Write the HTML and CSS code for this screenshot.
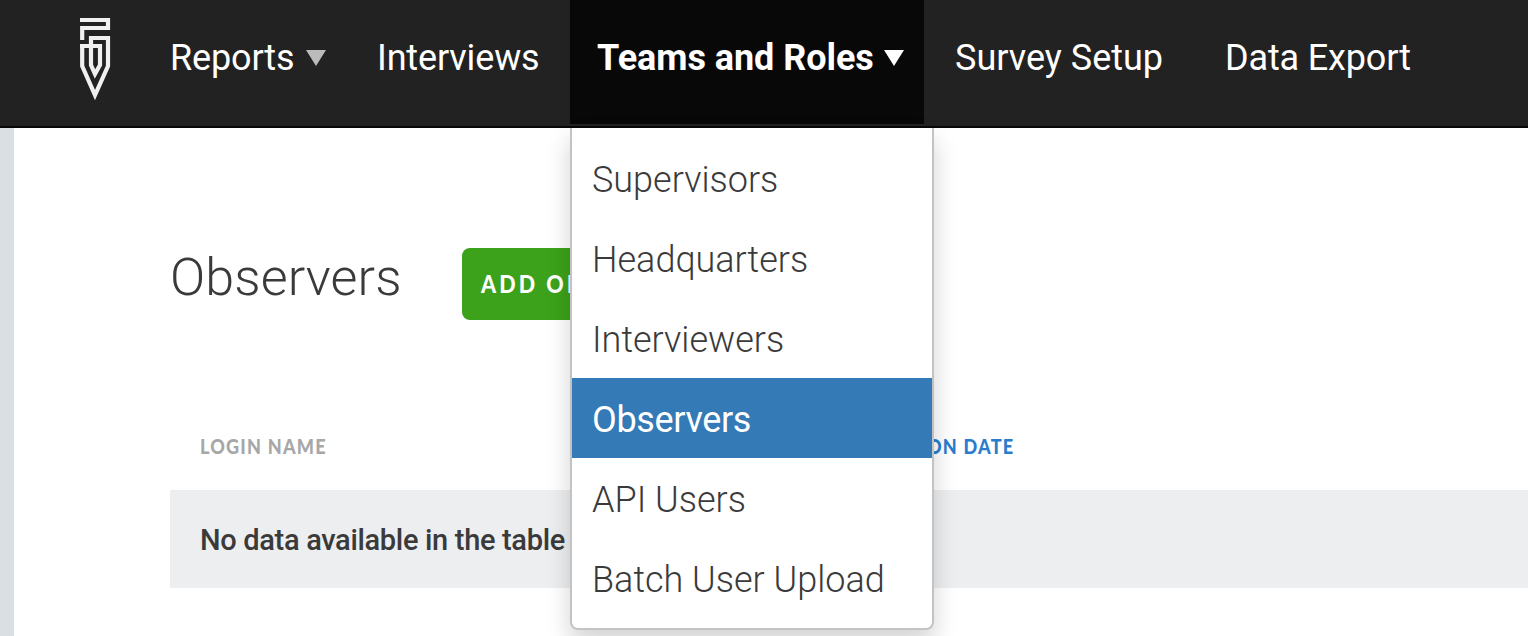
FILE: index.html
```
<!DOCTYPE html>
<html lang="en">
<head>
<meta charset="utf-8">
<title>Observers</title>
<link rel="stylesheet" href="styles.css">
</head>
<body>
<header class="navbar">
  <a class="logo" aria-label="Home">
    <svg width="32" height="84" viewBox="0 0 32 84" fill="none" stroke="#f0f0f1" stroke-width="4.2">
      <path d="M1 3H29V11H3.2V23"/>
      <path d="M1 29H21V48L16 57L12 48V21H29V49L16 78L3.2 49V29"/>
    </svg>
  </a>
  <nav class="menu">
    <a class="item reports"><span class="label">Reports</span><i class="caret"></i></a>
    <a class="item interviews"><span class="label">Interviews</span></a>
    <div class="item teams active"><span class="label">Teams and Roles</span><i class="caret"></i>
      <ul class="dropdown">
        <li><span>Supervisors</span></li>
        <li><span>Headquarters</span></li>
        <li><span>Interviewers</span></li>
        <li class="selected"><span>Observers</span></li>
        <li><span>API Users</span></li>
        <li><span>Batch User Upload</span></li>
      </ul>
    </div>
    <a class="item survey"><span class="label">Survey Setup</span></a>
    <a class="item export"><span class="label">Data Export</span></a>
  </nav>
</header>
<main class="page">
  <div class="heading">
    <h1>Observers</h1>
    <button class="add"><span class="narrow">ADD OBSERVER</span></button>
  </div>
  <div class="table">
    <div class="thead"><span class="login"><span class="narrow">LOGIN NAME</span></span><span class="narrow created">CREATION DATE</span></div>
    <div class="empty">No data available in the table</div>
  </div>
</main>
</body>
</html>
```
FILE: styles.css
```
* { box-sizing: border-box; }
body { margin: 0; height: 636px; overflow: hidden; background: #fff; font-family: Roboto, sans-serif; color: #3a3a3a; }
.navbar { display: flex; height: 128px; background: #222; border-bottom: 2px solid #080808; }
.logo { width: 139px; padding: 17px 0 0 79px; }
.menu { display: flex; height: 124px; }
.item { position: relative; display: flex; align-items: center; padding: 0 31px 8px; font-size: 36px; letter-spacing: -0.15px; color: #fff; white-space: nowrap; }
.reports { width: 207px; }
.interviews { width: 224px; }
.survey { width: 270px; letter-spacing: 0; }
.teams { width: 354px; padding-left: 27px; background: #080808; font-weight: 700; letter-spacing: -0.05px; }
.caret { margin-left: 12px; border: 10px solid transparent; border-top: 16px solid #bbb; border-bottom: 0; }
.active .caret { margin-left: 10px; border-top-color: #fff; }
.dropdown { position: absolute; z-index: 2; top: 128px; left: 0; width: 364px; height: 502px; margin: 0; padding: 10px 0; list-style: none; letter-spacing: 0; background: #fff; border: 2px solid #c3c3c3; border-top: 0; border-radius: 0 0 8px 8px; box-shadow: 0 12px 24px rgba(0,0,0,.18); }
.dropdown li { display: flex; align-items: center; height: 80px; padding: 4px 0 0 20px; font-size: 36px; font-weight: 300; color: #3a3a3a; }
.dropdown .selected { background: #337ab7; color: #fff; font-weight: 400; letter-spacing: -0.35px; }
.page { height: 508px; padding: 120px 0 0 156px; border-left: 14px solid #dadfe3; }
.heading { display: flex; height: 72px; }
h1 { width: 292px; margin: 0; font-size: 52px; line-height: 60px; font-weight: 300; letter-spacing: 0.1px; }
.narrow { display: inline-block; transform: scaleX(.86); transform-origin: 0 50%; white-space: nowrap; }
.add { width: 280px; height: 72px; padding: 0 19px 2px; border: 0; border-radius: 8px; background: #3ca21b; color: #fff; font: 900 25px Lato, sans-serif; letter-spacing: 3.6px; text-align: left; }
.table { margin-top: 100px; }
.thead { display: flex; height: 70px; padding: 13px 30px 0; font: 900 21px/26px Lato, sans-serif; letter-spacing: 1.4px; color: #a7a7a7; }
.login { width: 658px; }
.created { color: #2a7dcc; }
.empty { height: 98px; padding-left: 30px; background: #edeef0; font-size: 29px; line-height: 100px; font-weight: 500; letter-spacing: -0.32px; }
```
